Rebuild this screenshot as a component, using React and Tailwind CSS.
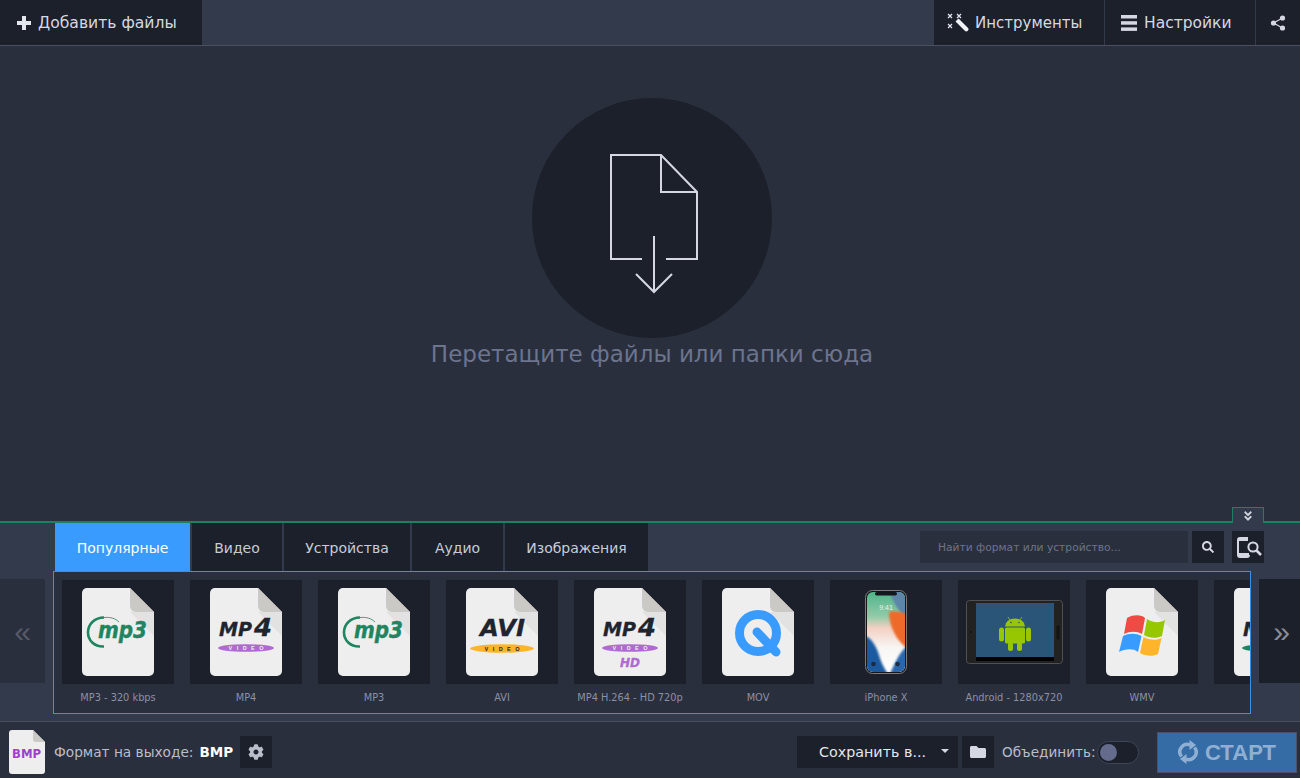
import { FaCog, FaSearch, FaFolder, FaAngleDoubleDown } from 'react-icons/fa';

const uiFont = '"DejaVu Sans", sans-serif';
const logoFont = '"Liberation Sans", sans-serif';
const heavyFont = '"DejaVu Sans", sans-serif';

function DocShape({ children }) {
    return (
        <svg viewBox="0 0 72 88" className="w-[72px] h-[88px]">
            <path d="M5 0H48L72 24V83a5 5 0 0 1-5 5H5a5 5 0 0 1-5-5V5a5 5 0 0 1 5-5Z" fill="#eeeeee" />
            <path d="M48 24H72V48Z" fill="#e2e2e2" />
            <path d="M48 0L72 24H54a6 6 0 0 1-6-6Z" fill="#cbc9c6" />
            {children}
        </svg>
    );
}

function Mp3Logo() {
    return (
        <DocShape>
            <path d="M22 58.500C12 59 6 52 6 44.500C6 36 13 29.500 22 29.500" fill="none" stroke="#1f8560" strokeWidth="2.600" />
            <path d="M22 29.500C28 29 33 30 37 34" fill="none" stroke="#1f8560" strokeWidth="0.800" />
            <text x="16" y="50" fontFamily={heavyFont} fontSize="23" fontWeight="700" fontStyle="italic" fill="#1f8560" stroke="#1f8560" strokeWidth="0.400" textLength="49" lengthAdjust="spacingAndGlyphs">mp3</text>
        </DocShape>
    );
}

function VideoBadge({ cy, rx, ry, color, ink }) {
    return (
        <>
            <ellipse cx="36" cy={cy} rx={rx} ry={ry} fill={color} />
            <text x="36" y={cy + 2} textAnchor="middle" fontFamily={logoFont} fontSize="5.500" fontWeight="700" fill={ink} textLength="35">VIDEO</text>
        </>
    );
}

function Mp4Logo({ hd, badge = '#b069d0' }) {
    return (
        <DocShape>
            <text x="9" y="48" fontFamily={heavyFont} fontSize="20" fontWeight="700" fontStyle="italic" fill="#20242f" stroke="#20242f" strokeWidth="0.300" textLength="33" lengthAdjust="spacingAndGlyphs">MP</text>
            <text x="44" y="48" fontFamily={heavyFont} fontSize="25" fontWeight="700" fontStyle="italic" fill="#20242f" stroke="#20242f" strokeWidth="0.300" textLength="18" lengthAdjust="spacingAndGlyphs">4</text>
            <VideoBadge cy={60} rx="28" ry="3.800" color={badge} ink="#eeeeee" />
            {hd && <text x="36" y="79" textAnchor="middle" fontFamily={heavyFont} fontSize="12" fontWeight="700" fontStyle="italic" fill="#b069d0" stroke="#b069d0" strokeWidth="0.300">HD</text>}
        </DocShape>
    );
}

function AviLogo() {
    return (
        <DocShape>
            <text x="14" y="48" fontFamily={heavyFont} fontSize="23" fontWeight="700" fontStyle="italic" fill="#20242f" stroke="#20242f" strokeWidth="0.300" textLength="45" lengthAdjust="spacingAndGlyphs">AVI</text>
            <VideoBadge cy={60.500} rx="32" ry="4.200" color="#ffb42a" ink="#20242f" />
        </DocShape>
    );
}

function MovLogo() {
    return (
        <DocShape>
            <circle cx="36" cy="45" r="18.500" fill="none" stroke="#3a9bff" strokeWidth="9" />
            <path d="M35 44L54 64" stroke="#3a9bff" strokeWidth="9" strokeLinecap="round" />
        </DocShape>
    );
}

function WindowsFlags() {
    return (
        <g>
            <path d="M21 30C28 26 36 27 39 30L36 46C31 43 24 43 18 46Z" fill="#f04a45" />
            <path d="M41 31C47 35 54 35 59 32L56 48C50 51 43 50 38 47Z" fill="#97c700" />
            <path d="M17 48C23 45 30 45 35.500 48L32 64C27 60 19 61 13 64Z" fill="#3a9bff" />
            <path d="M37.500 49C43 52 50 53 55.500 50L52 66C47 69 39 68 34 65Z" fill="#ffb42a" />
        </g>
    );
}

function IphoneArt() {
    return (
        <svg viewBox="0 0 42 84" className="w-[42px] h-[84px]">
            <defs>
                <linearGradient id="iphoneBg" x1="0" y1="0" x2="0" y2="1">
                    <stop offset="0" stopColor="#4fb58a" />
                    <stop offset="0.3" stopColor="#8fcaa8" />
                    <stop offset="0.45" stopColor="#f3d0c2" />
                    <stop offset="0.7" stopColor="#f8f6f4" />
                    <stop offset="1" stopColor="#ffffff" />
                </linearGradient>
                <filter id="iphoneBlur"><feGaussianBlur stdDeviation="1.300" /></filter>
                <clipPath id="iphoneClip"><rect x="2" y="2" width="38" height="80" rx="6" /></clipPath>
            </defs>
            <rect x="0.500" y="0.500" width="41" height="83" rx="7" fill="#15171c" stroke="#7c7c7c" />
            <g clipPath="url(#iphoneClip)">
                <rect x="2" y="2" width="38" height="80" fill="url(#iphoneBg)" />
                <path d="M24 0H42V30C36 24 28 14 24 0Z" fill="#5d86a8" filter="url(#iphoneBlur)" />
                <path d="M24 22C30 20 36 22 42 24V58C33 52 24 38 24 22Z" fill="#ee6a2a" filter="url(#iphoneBlur)" />
                <path d="M0 46C7 48 12 58 14 65C16 72 18 76 23 84H0Z" fill="#1d5aa0" filter="url(#iphoneBlur)" />
                <path d="M42 56C35 62 30 72 25 84H42Z" fill="#2a66ac" filter="url(#iphoneBlur)" />
            </g>
            <rect x="10" y="2" width="22" height="3.500" rx="1.700" fill="#15171c" />
            <text x="21" y="20" textAnchor="middle" fontFamily={logoFont} fontSize="7" fill="#e8f2ee">9:41</text>
            <circle cx="8.500" cy="74" r="2.300" fill="#1b2b44" />
            <circle cx="32.500" cy="74" r="2.300" fill="#1b2b44" />
        </svg>
    );
}

function TabletArt() {
    return (
        <svg viewBox="0 0 97 64" className="w-[97px] h-[64px]">
            <rect x="0.500" y="0.500" width="96" height="63" rx="3" fill="#222223" stroke="#505051" />
            <rect x="10" y="3" width="78" height="54" fill="#2a5578" />
            <rect x="10" y="57" width="78" height="4" fill="#000000" />
            <circle cx="5" cy="32" r="0.800" fill="#000000" />
            <rect x="90" y="25" width="4" height="15" rx="1.500" fill="#141415" stroke="#2c2c2d" strokeWidth="0.500" />
            <g fill="#97c700">
                <path d="M39 26.500a10 8 0 0 1 20 0Z" />
                <rect x="39" y="27.500" width="20" height="16" rx="1.500" />
                <rect x="33" y="27.500" width="5" height="14" rx="2.500" />
                <rect x="60" y="27.500" width="5" height="14" rx="2.500" />
                <rect x="42" y="42" width="5" height="9" rx="2.500" />
                <rect x="51" y="42" width="5" height="9" rx="2.500" />
            </g>
            <path d="M42 17L44 20M56 17L54 20" stroke="#97c700" strokeWidth="0.800" />
            <circle cx="45" cy="22.500" r="0.800" fill="#2a5578" />
            <circle cx="53" cy="22.500" r="0.800" fill="#2a5578" />
        </svg>
    );
}

function PlusIcon() {
    return (
        <svg viewBox="0 0 14 14" className="w-[14px] h-[14px]" fill="#e4e6ee">
            <path d="M5 0H9V5H14V9H9V14H5V9H0V5H5Z" />
        </svg>
    );
}

function WandIcon() {
    return (
        <svg viewBox="0 0 22 22" className="w-[22px] h-[22px]">
            <path d="M8.500 9.500L11.500 6.500L20.800 15.800A2.100 2.100 0 0 1 17.800 18.800Z" fill="#f2f3f7" />
            <path d="M1 2L5 6M5 2L1 6M10 2L14 6M14 2L10 6M1 12L5 16M5 12L1 16" stroke="#e4e6ee" strokeWidth="1.200" />
        </svg>
    );
}

function BarsIcon() {
    return (
        <svg viewBox="0 0 16 16" className="w-[16px] h-[16px]" fill="#d5d8e3">
            <rect width="16" height="3.500" />
            <rect y="6.200" width="16" height="3.500" />
            <rect y="12.400" width="16" height="3.500" />
        </svg>
    );
}

function ShareIcon() {
    return (
        <svg viewBox="0 0 16 16" className="w-[16px] h-[16px]" fill="#d5d8e3" stroke="#d5d8e3">
            <path d="M12.500 3L3.500 8L12.500 13" fill="none" strokeWidth="1.200" />
            <circle cx="12.500" cy="3" r="2.600" stroke="none" />
            <circle cx="3.500" cy="8" r="2.600" stroke="none" />
            <circle cx="12.500" cy="13" r="2.600" stroke="none" />
        </svg>
    );
}

function RefreshIcon() {
    const half = (
        <>
            <path d="M3.500 16.500A7.500 7.500 0 0 1 12 4.800" fill="none" stroke="#8fafd3" strokeWidth="3.500" />
            <path d="M11.500 0L18 5L11.500 10Z" fill="#8fafd3" />
        </>
    );
    return (
        <svg viewBox="0 0 20 24" className="w-[20px] h-[24px]">
            {half}
            <g transform="rotate(180 10 12)">{half}</g>
        </svg>
    );
}

function DeviceSearchIcon() {
    return (
        <svg viewBox="0 0 32 32" className="w-[32px] h-[32px]" fill="none" stroke="#d5d8e3">
            <path d="M16 7H8A2 2 0 0 0 6 9V24A2 2 0 0 0 8 26H15A2 2 0 0 0 17 24" strokeWidth="2" />
            <path d="M6 22H17V25L15 26H8L6 25Z" fill="#d5d8e3" stroke="none" />
            <path d="M6 8H16V10H6Z" fill="#d5d8e3" stroke="none" />
            <circle cx="21" cy="16" r="4.600" strokeWidth="2" />
            <path d="M24.500 19.500L29 24" strokeWidth="2.600" />
        </svg>
    );
}

const formats = [
    { label: 'MP3 - 320 kbps', art: <Mp3Logo /> },
    { label: 'MP4', art: <Mp4Logo /> },
    { label: 'MP3', art: <Mp3Logo /> },
    { label: 'AVI', art: <AviLogo /> },
    { label: 'MP4 H.264 - HD 720p', art: <Mp4Logo hd /> },
    { label: 'MOV', art: <MovLogo /> },
    { label: 'iPhone X', art: <IphoneArt /> },
    { label: 'Android - 1280x720', art: <TabletArt /> },
    { label: 'WMV', art: <DocShape><WindowsFlags /></DocShape> },
    { label: '', art: <Mp4Logo badge="#1f8560" /> },
];

const tabs = [
    { label: 'Популярные', width: 'w-[135px]', active: true },
    { label: 'Видео', width: 'w-[90px]' },
    { label: 'Устройства', width: 'w-[126px]' },
    { label: 'Аудио', width: 'w-[91px]' },
    { label: 'Изображения', width: 'w-[143px]' },
];

export default function App() {
    return (
        <div className="w-[1300px] h-[778px] flex flex-col overflow-hidden bg-[#2a2f3e] text-[#d5d8e3]" style={{ fontFamily: uiFont }}>
            <header className="h-[46px] flex-none flex bg-[#333a4b] border-b border-[#4a4e5f]">
                <button className="w-[202px] flex items-center pl-[17px] gap-[7px] bg-[#1c202b] text-[15.600px]">
                    <PlusIcon />
                    <span className="mt-[2px]">Добавить файлы</span>
                </button>
                <div className="ml-auto flex gap-px">
                    <button className="w-[170px] flex items-center pl-[13px] gap-[6px] bg-[#1c202b] text-[15px]">
                        <WandIcon />
                        <span className="mt-[2px]">Инструменты</span>
                    </button>
                    <button className="w-[150px] flex items-center pl-[16px] gap-[7px] bg-[#1c202b] text-[15.500px]">
                        <BarsIcon />
                        <span className="mt-[2px]">Настройки</span>
                    </button>
                    <button className="w-[44px] flex items-center justify-center bg-[#1c202b]">
                        <ShareIcon />
                    </button>
                </div>
            </header>

            <main className="flex-1 flex flex-col items-center pt-[52px] pl-[4px]">
                <div className="w-[240px] h-[240px] rounded-full bg-[#1c202b]">
                    <svg viewBox="0 0 240 240" className="w-full h-full" fill="none" stroke="#d5d8e3" strokeWidth="2">
                        <path d="M110 161H79V57H129L165 94V161H134" />
                        <path d="M129 57V94H165" />
                        <path d="M122 138V194M104 176L122 194L140 176" />
                    </svg>
                </div>
                <p className="text-[23px] leading-8 text-[#6c748e]">Перетащите файлы или папки сюда</p>
            </main>

            <section className="relative h-[200px] flex-none bg-[#333a4b] border-t-2 border-[#1f7f62]">
                <button className="absolute -top-[16px] right-[36px] w-[32px] h-[16px] flex items-center justify-center bg-[#333a4b] border border-b-0 border-[#1f7f62]">
                    <FaAngleDoubleDown className="w-[12px] h-[12px] text-[#d5d8e3]" />
                </button>
                <div className="h-[48px] flex pl-[55px] pr-[36px]">
                    <div className="flex gap-[2px]">
                        {tabs.map((tab) => (
                            <div
                                key={tab.label}
                                className={`${tab.width} pt-[2px] flex items-center justify-center text-[14px] ${tab.active ? 'bg-[#3a9bff] text-white' : 'bg-[#1c202b] text-[#c8ccd8]'}`}
                            >
                                {tab.label}
                            </div>
                        ))}
                    </div>
                    <div className="ml-auto mt-[8px] h-[32px] flex">
                        <div className="w-[268px] flex items-center pl-[18px] pt-[3px] bg-[#2a2f3e] text-[10.700px] text-[#6d7389]">Найти формат или устройство...</div>
                        <button className="ml-[4px] w-[32px] flex items-center justify-center bg-[#1c202b]">
                            <FaSearch className="w-[12px] h-[12px] text-[#d5d8e3]" />
                        </button>
                        <button className="ml-[8px] w-[32px] flex items-center justify-center bg-[#1c202b]">
                            <DeviceSearchIcon />
                        </button>
                    </div>
                </div>
                <div className="flex">
                    <div className="w-[45px] h-[104px] mt-[8px] flex-none flex items-center justify-center bg-[#2a2f3e] text-[30px] text-[#565a68]" style={{ fontFamily: logoFont }}>«</div>
                    <div className="ml-[8px] w-[1198px] h-[143px] flex-none flex gap-[16px] overflow-hidden border border-[#3a8fe8] bg-[#2a2f3e] pt-[8px] pl-[8px]">
                        {formats.map((format, i) => (
                            <div key={i} className="w-[112px] flex-none">
                                <div className="h-[104px] flex items-center justify-center bg-[#1c202b]">{format.art}</div>
                                <div className="mt-[7px] text-center text-[9.800px] leading-[14px] whitespace-nowrap text-[#8a90a5]">{format.label}</div>
                            </div>
                        ))}
                    </div>
                    <div className="ml-[8px] w-[41px] h-[104px] mt-[8px] pl-[4px] flex-none flex items-center justify-center bg-[#1c202b] text-[30px] text-[#8a8d98]" style={{ fontFamily: logoFont }}>»</div>
                </div>
            </section>

            <footer className="h-[57px] flex-none flex items-center pt-[4px] border-t border-[#4a4e5f] bg-[#2a2f3e]">
                <svg viewBox="0 0 36 44" className="ml-[9px] w-[36px] h-[44px]">
                    <path d="M3 0H24L36 12V41a3 3 0 0 1-3 3H3a3 3 0 0 1-3-3V3a3 3 0 0 1 3-3Z" fill="#eeeeee" />
                    <path d="M24 0L36 12H27a3 3 0 0 1-3-3Z" fill="#cbc9c6" />
                    <text x="3" y="28" fontFamily={heavyFont} fontSize="13" fontWeight="700" fill="#a03fd0" textLength="29" lengthAdjust="spacingAndGlyphs">BMP</text>
                </svg>
                <span className="ml-[9px] text-[13.700px] text-[#b9bdcc]">Формат на выходе:</span>
                <span className="ml-[6px] text-[13.500px] font-bold text-white">BMP</span>
                <button className="ml-[7px] w-[32px] h-[32px] flex items-center justify-center bg-[#1c202b]">
                    <FaCog className="w-[16px] h-[16px] text-[#b9bdcc]" />
                </button>
                <button className="ml-auto relative w-[161px] h-[32px] pl-[22px] pt-[2px] text-left bg-[#1c202b] text-[14.300px] text-[#e4e6ee]">
                    Сохранить в...
                    <span className="absolute right-[9px] top-[13px] border-x-[4px] border-x-transparent border-t-[4px] border-t-[#d5d8e3]" />
                </button>
                <button className="ml-[4px] w-[32px] h-[32px] flex items-center justify-center bg-[#1c202b]">
                    <FaFolder className="w-[16px] h-[16px] text-[#d5d8e3]" />
                </button>
                <span className="ml-[8px] w-[93px] text-[13.600px] whitespace-nowrap text-[#b9bdcc]">Объединить:</span>
                <div className="ml-[2px] w-[42px] h-[23px] flex items-center pl-[2px] rounded-full border border-[#3f4558] bg-[#1c202b]">
                    <div className="w-[17px] h-[17px] rounded-full bg-[#646b8c]" />
                </div>
                <button className="ml-[18px] mr-[3px] w-[140px] h-[41px] flex items-center justify-center gap-[7px] bg-[#356ca6] border border-[#4a5068] text-[22px] font-bold text-[#8fafd3]" style={{ fontFamily: logoFont }}>
                    <RefreshIcon />
                    СТАРТ
                </button>
            </footer>
        </div>
    );
}
